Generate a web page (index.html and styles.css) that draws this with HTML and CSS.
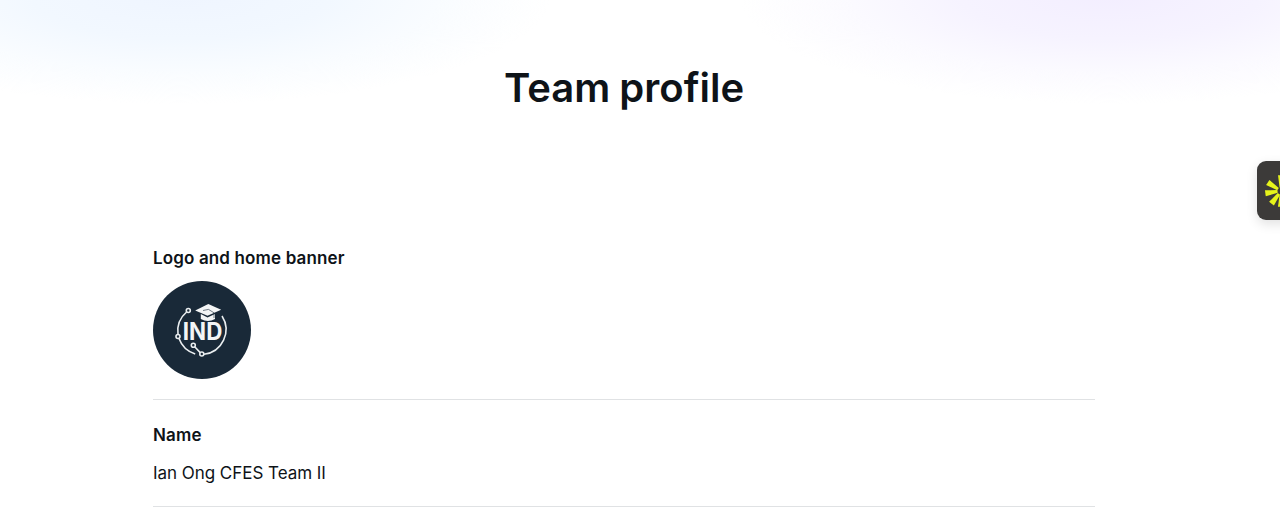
FILE: index.html
```html
<!DOCTYPE html>
<html lang="en">
<head>
  <meta charset="UTF-8" />
  <meta name="viewport" content="width=device-width, initial-scale=1.0" />
  <title>Team profile</title>
  <link rel="stylesheet" href="styles.css">
</head>
<body>
  <main class="page">
    <h1 class="page-title">Team profile</h1>

    <section class="profile-row logo-row">
      <h2>Logo and home banner</h2>
      <svg class="team-logo" viewBox="0 0 98 98" role="img" aria-label="IND">
        <circle cx="49" cy="49" r="49" fill="#192938" />
        <g fill="none" stroke="#e9edef" stroke-width="1.6">
          <path d="M33.6 31A25 25 0 0 0 25 53.2M26 57.6A25 25 0 0 0 42.2 73M69 35A25 25 0 0 1 51 73.3M41.7 65.8L47.2 71.6" />
          <circle cx="35.3" cy="29.5" r="2" />
          <circle cx="25" cy="55.5" r="2" />
          <circle cx="40.3" cy="64.2" r="2" />
          <circle cx="48.8" cy="73" r="2" />
        </g>
        <text class="logo-text" x="29.8" y="59" textLength="39.5" lengthAdjust="spacingAndGlyphs">IND</text>
        <path d="M42.2 29.4L55.3 23L68.2 28.8L54.5 34.8Z" fill="#f3f5f6" />
        <path d="M47.8 33L54.5 36.4L62 33V38Q55 42 47.8 38Z" fill="#f3f5f6" />
        <path d="M50 29.5L55.5 28.4L61 31.8V37" fill="none" stroke="#192938" stroke-width="0.6" />
      </svg>
    </section>

    <section class="profile-row name-row">
      <h2>Name</h2>
      <p>Ian Ong CFES Team II</p>
    </section>
  </main>

  <button class="side-widget" aria-label="Open assistant">
    <svg viewBox="0 0 36 36" fill="#e6f31b">
      <path id="ray" d="M15 2.2H21L19.4 14.5H16.6Z" />
      <use href="#ray" transform="rotate(45 18 18)" />
      <use href="#ray" transform="rotate(90 18 18)" />
      <use href="#ray" transform="rotate(135 18 18)" />
      <use href="#ray" transform="rotate(180 18 18)" />
      <use href="#ray" transform="rotate(217 18 18)" />
      <use href="#ray" transform="rotate(262 18 18)" />
      <use href="#ray" transform="rotate(303 18 18)" />
    </svg>
  </button>
</body>
</html>
```
FILE: styles.css
```css
* {
  box-sizing: border-box;
}

body {
  margin: 0;
  height: 508px;
  overflow: hidden;
  font-family: Inter, sans-serif;
  color: #0e1318;
  background:
    radial-gradient(ellipse 370px 108px at 180px -4px, #eff5ff 0%, #f2f8ff 40%, #f9fcff 70%, rgba(255, 255, 255, 0) 100%),
    radial-gradient(ellipse 370px 108px at 1110px -4px, #f3eeff 0%, #f6f3ff 40%, #fbfaff 70%, rgba(255, 255, 255, 0) 100%),
    #fff;
}

.page {
  width: 942px;
  margin-left: 153px;
  padding-top: 63px;
}

.page-title {
  margin: 0 0 134px;
  font-size: 40px;
  line-height: 50px;
  font-weight: 600;
  word-spacing: -1px;
  text-align: center;
}

.profile-row {
  border-bottom: 1px solid #e0e2e4;
}

.profile-row h2 {
  margin: 0;
  font-size: 17px;
  line-height: 22px;
  font-weight: 600;
  letter-spacing: 0.14px;
}

.profile-row p {
  margin: 0;
  font-size: 17px;
  line-height: 22px;
  letter-spacing: -0.04px;
}

.logo-row {
  height: 153px;
}

.team-logo {
  display: block;
  width: 98px;
  height: 98px;
  margin-top: 12px;
}

.logo-text {
  font-size: 24px;
  font-weight: 700;
  fill: #f3f5f6;
}

.name-row {
  height: 107px;
  padding-top: 24px;
}

.name-row p {
  margin-top: 16px;
}

.side-widget {
  position: absolute;
  top: 161px;
  right: -24px;
  width: 47px;
  height: 59px;
  padding: 0 0 0 6px;
  border: none;
  border-radius: 9px;
  background: #3c3a39;
  box-shadow: 0 4px 12px rgba(0, 0, 0, 0.12);
}

.side-widget svg {
  display: block;
  width: 36px;
  height: 36px;
}
```
